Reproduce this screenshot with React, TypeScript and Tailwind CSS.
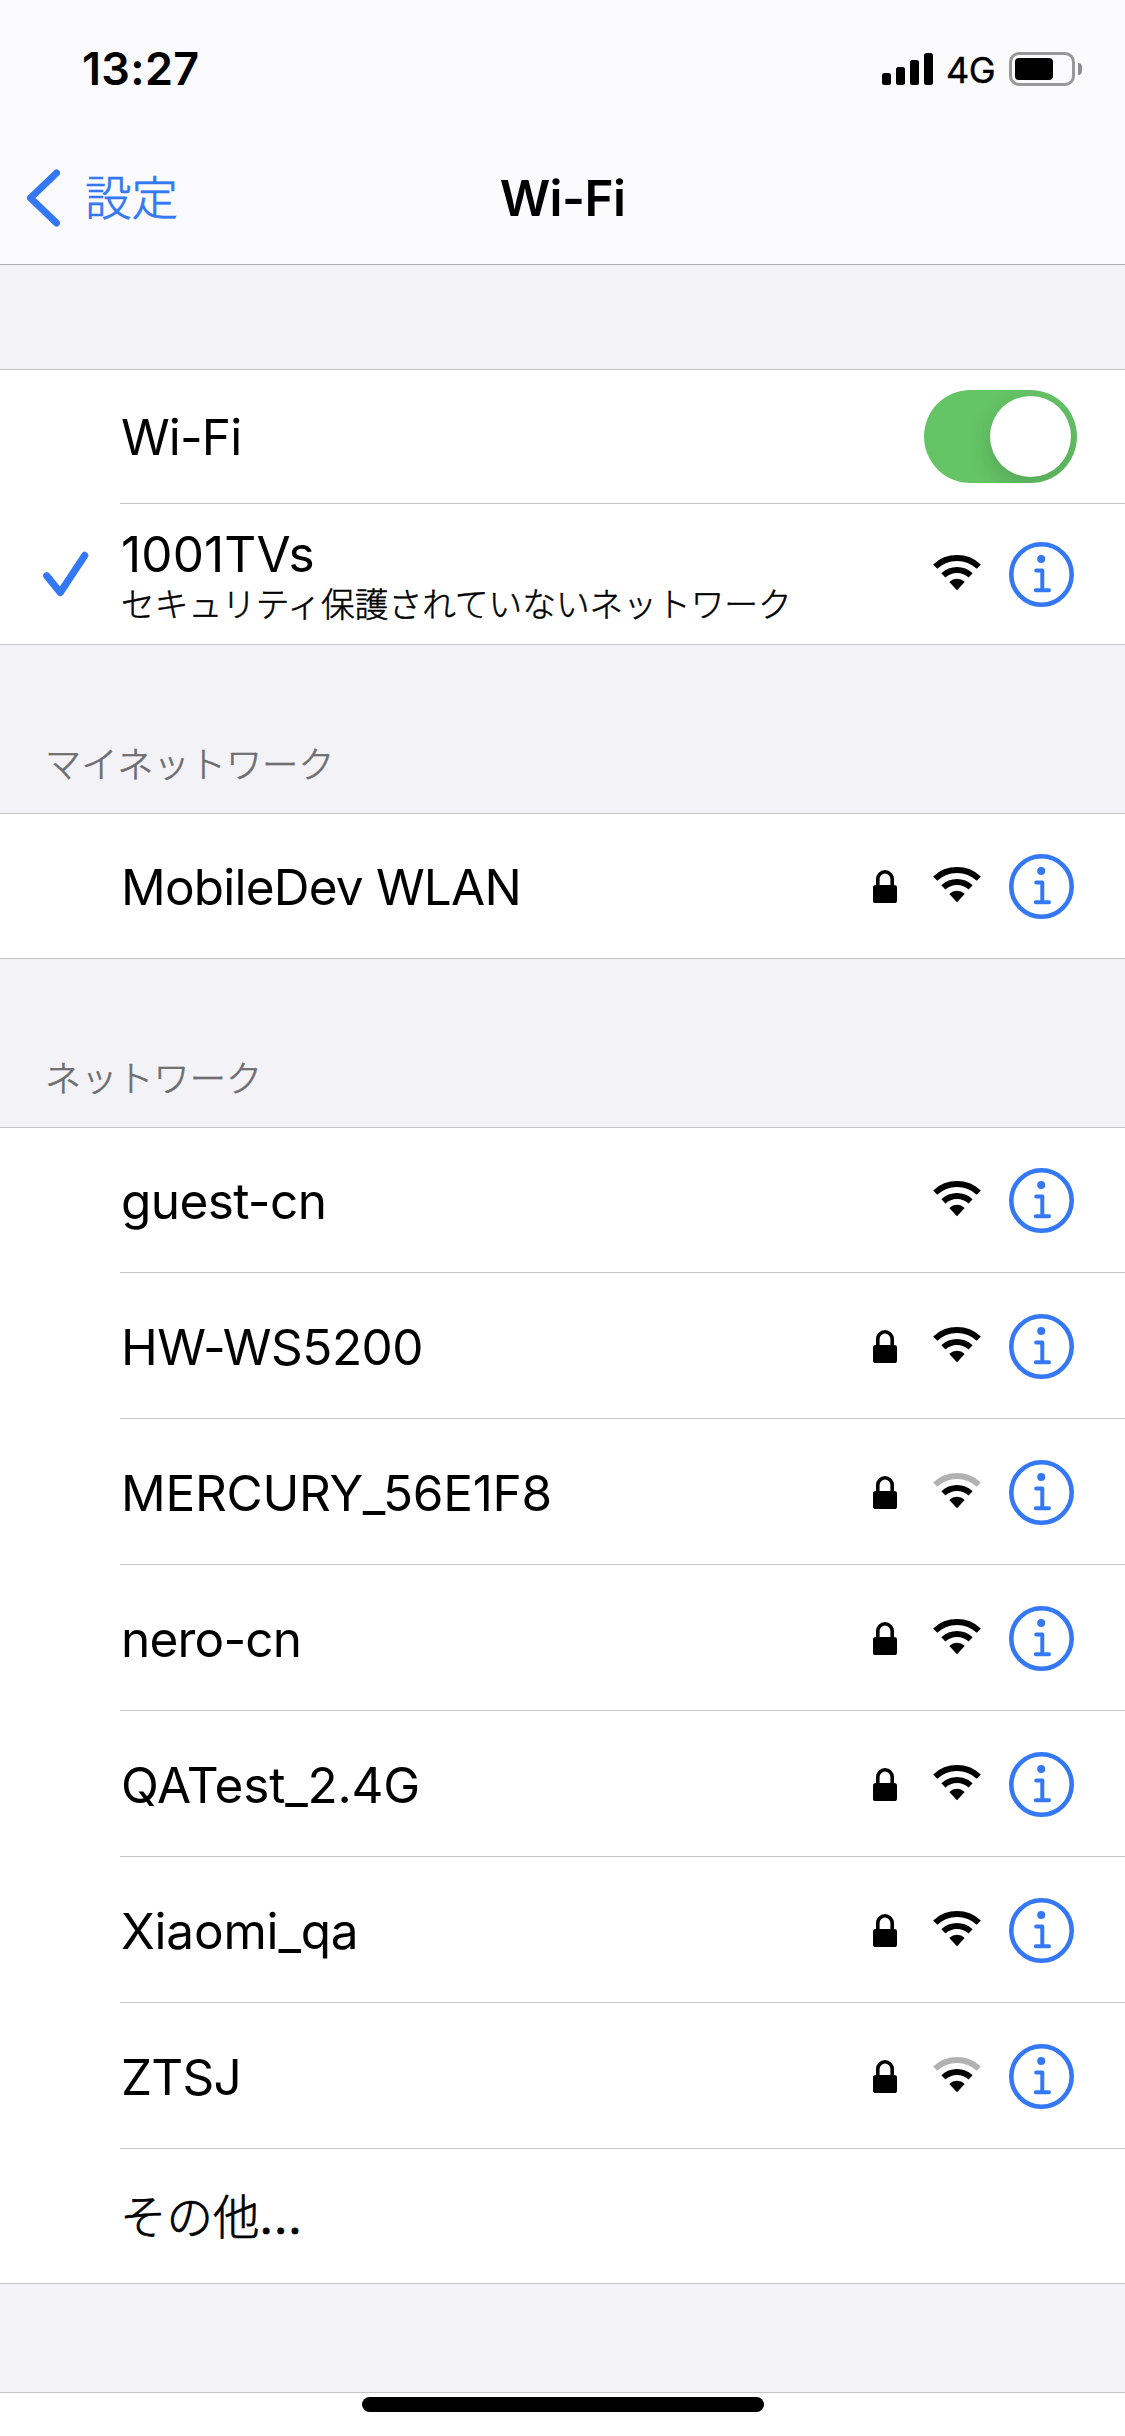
import type { ReactNode } from "react";

type Network = { name: string; locked: boolean; weak?: boolean; tracking: string };

const networks: Network[] = [
  { name: "guest-cn", locked: false, tracking: "tracking-[-0.6px]" },
  { name: "HW-WS5200", locked: true, tracking: "tracking-[-0.5px]" },
  { name: "MERCURY_56E1F8", locked: true, weak: true, tracking: "tracking-[-0.25px]" },
  { name: "nero-cn", locked: true, tracking: "tracking-[-0.8px]" },
  { name: "QATest_2.4G", locked: true, tracking: "tracking-[-0.2px]" },
  { name: "Xiaomi_qa", locked: true, tracking: "tracking-[-0.2px]" },
  { name: "ZTSJ", locked: true, weak: true, tracking: "tracking-[-0.8px]" },
];

function WifiIcon({ weak = false }: { weak?: boolean }) {
  return (
    <svg width="48" height="36" viewBox="0 0 48 36" fill="none" stroke="#000" strokeWidth="6">
      <path d="M2.2 11.6A32 32 0 0 1 45.8 11.6" stroke={weak ? "#b2b2b2" : "#000"} />
      <path d="M10.4 20.4A20 20 0 0 1 37.6 20.4" />
      <path d="M16.3 26.9A11.3 11.3 0 0 1 31.7 26.9L24 35.3Z" fill="#000" stroke="none" />
    </svg>
  );
}

function LockIcon() {
  return (
    <svg width="24" height="33" viewBox="0 0 24 33" fill="none">
      <rect y="15" width="24" height="18" rx="2.6" fill="#000" />
      <path d="M4.8 17V9a7.2 7.2 0 0 1 14.4 0v8" stroke="#000" strokeWidth="3.6" />
    </svg>
  );
}

function InfoIcon() {
  return (
    <svg width="65" height="65" viewBox="0 0 65 65" fill="none" stroke="#3478f6" strokeLinecap="round" strokeLinejoin="round">
      <circle cx="32.5" cy="32.5" r="30.2" strokeWidth="4.6" />
      <circle cx="32.2" cy="17" r="4" fill="#3478f6" stroke="none" />
      <path d="M27.2 28.4H33.3V48M26.8 48.2H40" strokeWidth="4" />
    </svg>
  );
}

function Accessories({ locked, weak }: { locked: boolean; weak?: boolean }) {
  return (
    <div className="ml-auto flex items-center pr-[51px]">
      {locked && (
        <span className="mr-9 pt-px">
          <LockIcon />
        </span>
      )}
      <span className="mr-7 pb-0.5">
        <WifiIcon weak={weak} />
      </span>
      <span className="pt-px">
        <InfoIcon />
      </span>
    </div>
  );
}

function Group({ children }: { children: ReactNode }) {
  return <section className="border-y border-[#c6c6c8] bg-white">{children}</section>;
}

function SectionTitle({ children }: { children: ReactNode }) {
  return (
    <h2 className="flex h-[168px] items-end pb-[22px] pl-[45px] text-[36.2px] font-light leading-[52px] text-[#6d6d70] [-webkit-text-stroke:0.6px_#6d6d70]">
      {children}
    </h2>
  );
}

function NetworkRow({ network, first = false }: { network: Network; first?: boolean }) {
  return (
    <div
      className={
        first
          ? "ml-[120px] flex h-[144px] items-center"
          : "ml-[120px] flex h-[146px] items-center border-t border-[#c6c6c8] pt-px"
      }
    >
      <span className={`pl-px pt-0.5 text-[49.5px] leading-[60px] ${network.tracking}`}>{network.name}</span>
      <Accessories locked={network.locked} weak={network.weak} />
    </div>
  );
}

export default function App() {
  return (
    <div
      lang="ja"
      className="flex h-[2436px] w-[1125px] flex-col overflow-hidden bg-[#f2f2f7] font-['Inter','Noto_Sans_CJK_JP',sans-serif] text-black"
    >
      <header className="h-[265px] shrink-0 border-b border-[#b1b1b4] bg-[#fbfbfd]">
        <div className="flex h-[132px] items-center pl-[82px] pr-[43px] pt-[6px]">
          <span className="text-[45px] font-semibold leading-[54px] tracking-[0.3px]">13:27</span>
          <div className="ml-auto flex items-center">
            <div className="flex h-8 items-end gap-[5px]">
              <span className="h-3 w-[9px] rounded-[2.5px] bg-black" />
              <span className="h-[18px] w-[9px] rounded-[2.5px] bg-black" />
              <span className="h-[25px] w-[9px] rounded-[2.5px] bg-black" />
              <span className="h-8 w-[9px] rounded-[2.5px] bg-black" />
            </div>
            <span className="ml-[13px] w-[50px] pt-0.5 text-[36px] leading-[44px] tracking-[-0.5px] [-webkit-text-stroke:0.4px_#000]">4G</span>
            <div className="ml-[13px] flex h-[34px] w-[66px] items-center rounded-[10px] border-[3px] border-[#98989a] pl-[3px]">
              <span className="h-[22px] w-[38px] rounded-[4px] bg-black" />
            </div>
            <span className="ml-[3px] h-3 w-1 rounded-r-full bg-[#8e8e90]" />
          </div>
        </div>
        <div className="grid h-[132px] grid-cols-3 items-center">
          <div className="flex items-center pl-[26px]">
            <svg width="34" height="58" viewBox="0 0 34 58" fill="none">
              <path d="M30.5 4L4.5 29L30.5 54" stroke="#3478f6" strokeWidth="7" strokeLinecap="round" strokeLinejoin="round" />
            </svg>
            <span className="ml-[25px] text-[46.5px] font-light leading-[60px] text-[#3478f6] [-webkit-text-stroke:0.7px_#3478f6]">
              設定
            </span>
          </div>
          <h1 className="text-center text-[49.5px] font-semibold leading-[60px] tracking-[-0.6px]">Wi-Fi</h1>
        </div>
      </header>

      <main className="flex flex-col pt-[104px]">
        <Group>
          <div className="ml-[120px] flex h-[133px] items-center pr-12">
            <span className="pl-px pt-px text-[49.5px] leading-[60px] tracking-[-0.9px]">Wi-Fi</span>
            <div className="ml-auto flex h-[93px] w-[153px] items-center justify-end overflow-hidden rounded-full bg-[#65c466] pr-1.5">
              <span className="size-[81px] rounded-full bg-white shadow-[0_9px_24px_rgba(0,0,0,0.16)]" />
            </div>
          </div>
          <div className="flex h-[141px]">
            <div className="flex w-[120px] items-center pl-[43px] pt-px">
              <svg width="46" height="46" viewBox="0 0 46 46" fill="none">
                <path d="M3.7 24.7L17.3 41.5L41.7 4.4" stroke="#3478f6" strokeWidth="7.2" strokeLinecap="round" strokeLinejoin="round" />
              </svg>
            </div>
            <div className="flex flex-1 items-center border-t border-[#c6c6c8]">
              <div className="flex flex-col pl-px pt-[6px]">
                <span className="text-[49.5px] leading-[56px] tracking-[0.15px]">1001TVs</span>
                <span className="text-[33.7px] font-light leading-[46px] [-webkit-text-stroke:0.5px_#000]">
                  セキュリティ保護されていないネットワーク
                </span>
              </div>
              <Accessories locked={false} />
            </div>
          </div>
        </Group>

        <SectionTitle>マイネットワーク</SectionTitle>
        <Group>
          <NetworkRow first network={{ name: "MobileDev WLAN", locked: true, tracking: "tracking-[-0.8px]" }} />
        </Group>

        <SectionTitle>ネットワーク</SectionTitle>
        <Group>
          {networks.map((n, i) => (
            <NetworkRow key={n.name} network={n} first={i === 0} />
          ))}
          <div className="ml-[120px] flex h-[135px] items-center border-t border-[#c6c6c8] pt-0.5 text-[46.5px] font-light leading-[60px] [-webkit-text-stroke:0.7px_#000]">
            その他<span className="font-normal tracking-[1px]">...</span>
          </div>
        </Group>
      </main>

      <footer className="mt-[108px] flex h-[44px] shrink-0 justify-center border-t border-[#c6c6c8] bg-white pt-1">
        <div className="h-[15px] w-[402px] rounded-full bg-black" />
      </footer>
    </div>
  );
}
